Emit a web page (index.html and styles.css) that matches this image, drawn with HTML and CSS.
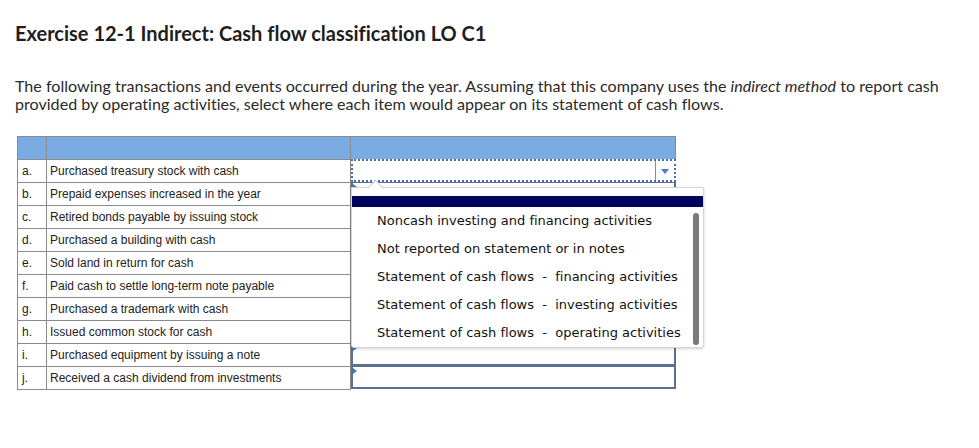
FILE: index.html
```html
<!DOCTYPE html>
<html>
<head>
<meta charset="utf-8">
<link rel="stylesheet" href="styles.css">
</head>
<body>
<div class="page">
  <h1 class="title">Exercise 12-1 Indirect: Cash flow classification LO C1</h1>
  <p class="intro">The following transactions and events occurred during the year. Assuming that this company uses the <em>indirect method</em> to report cash provided by operating activities, select where each item would appear on its statement of cash flows.</p>
  <div class="table-wrap">
    <table class="grid">
      <thead>
        <tr><th class="c-letter"></th><th class="c-desc"></th><th class="c-ans"></th></tr>
      </thead>
      <tbody>
        <tr><td class="c-letter">a.</td><td class="c-desc">Purchased treasury stock with cash</td><td class="c-ans"><div class="sel sel-focus"><span class="sel-btn"><span class="arrow"></span></span></div></td></tr>
        <tr><td class="c-letter">b.</td><td class="c-desc">Prepaid expenses increased in the year</td><td class="c-ans"><div class="sel"><span class="mark"></span></div></td></tr>
        <tr><td class="c-letter">c.</td><td class="c-desc">Retired bonds payable by issuing stock</td><td class="c-ans"><div class="sel"><span class="mark"></span></div></td></tr>
        <tr><td class="c-letter">d.</td><td class="c-desc">Purchased a building with cash</td><td class="c-ans"><div class="sel"><span class="mark"></span></div></td></tr>
        <tr><td class="c-letter">e.</td><td class="c-desc">Sold land in return for cash</td><td class="c-ans"><div class="sel"><span class="mark"></span></div></td></tr>
        <tr><td class="c-letter">f.</td><td class="c-desc">Paid cash to settle long-term note payable</td><td class="c-ans"><div class="sel"><span class="mark"></span></div></td></tr>
        <tr><td class="c-letter">g.</td><td class="c-desc">Purchased a trademark with cash</td><td class="c-ans"><div class="sel"><span class="mark"></span></div></td></tr>
        <tr><td class="c-letter">h.</td><td class="c-desc">Issued common stock for cash</td><td class="c-ans"><div class="sel"><span class="mark"></span></div></td></tr>
        <tr><td class="c-letter">i.</td><td class="c-desc">Purchased equipment by issuing a note</td><td class="c-ans"><div class="sel"><span class="mark"></span></div></td></tr>
        <tr><td class="c-letter">j.</td><td class="c-desc">Received a cash dividend from investments</td><td class="c-ans"><div class="sel"><span class="mark"></span></div></td></tr>
      </tbody>
    </table>
    <div class="popup">
      <span class="caret"></span>
      <div class="popup-bar"></div>
      <ul class="options">
        <li>Noncash investing and financing activities</li>
        <li>Not reported on statement or in notes</li>
        <li>Statement of cash flows&nbsp; -&nbsp; financing activities</li>
        <li>Statement of cash flows&nbsp; -&nbsp; investing activities</li>
        <li>Statement of cash flows&nbsp; -&nbsp; operating activities</li>
      </ul>
      <span class="scroll"></span>
    </div>
  </div>
</div>
</body>
</html>
```
FILE: styles.css
```css
html, body {
  margin: 0;
  padding: 0;
  background: #ffffff;
}
.page {
  padding: 20px 0 0 15px;
}
.title {
  margin: 0;
  font-family: Lato, "Open Sans", sans-serif;
  font-weight: 700;
  font-size: 20px;
  line-height: 26px;
  color: #1e1e1e;
  font-variant-ligatures: none;
}
.intro {
  margin: 31px 0 0 0;
  font-family: Lato, "Open Sans", sans-serif;
  font-size: 16.1px;
  line-height: 18px;
  color: #2a2a2a;
  width: 940px;
  font-variant-ligatures: none;
}
.intro em {
  font-style: italic;
}
.table-wrap {
  position: relative;
  margin: 23px 0 0 2px;
  width: 700px;
}
.grid {
  border-collapse: collapse;
  font-family: "Liberation Sans", Arial, sans-serif;
  font-size: 12px;
  color: #222;
}
.grid th {
  background: #7aabe2;
  height: 22px;
  padding: 0;
  border: 1px solid #8a8a8a;
}
.grid td {
  height: 22px;
  padding: 0;
  border: 1px solid #8a8a8a;
  vertical-align: middle;
}
.c-letter {
  width: 28px;
}
td.c-letter {
  padding-left: 4px;
  box-sizing: border-box;
}
.c-desc {
  width: 300px;
}
td.c-desc {
  padding-left: 3px;
}
.c-ans {
  width: 324px;
}
.grid td.c-ans {
  border: none;
  position: relative;
}
.sel {
  position: relative;
  box-sizing: border-box;
  height: 23px;
  border: 2px solid #5b6f96;
  border-top-width: 1px;
  margin-top: -1px;
}
.sel-focus {
  border: 2px dotted #4a6ea8;
  background: #fff;
}
.sel-btn {
  position: absolute;
  right: 0;
  top: 0;
  bottom: 0;
  width: 18px;
  border-left: 1px solid #8a8a8a;
}
.arrow {
  position: absolute;
  left: 5px;
  top: 8px;
  width: 0;
  height: 0;
  border-left: 4px solid transparent;
  border-right: 4px solid transparent;
  border-top: 5px solid #4a7bc4;
}
.mark {
  position: absolute;
  left: 0;
  top: 1px;
  width: 0;
  height: 0;
  border-top: 3px solid transparent;
  border-bottom: 3px solid transparent;
  border-left: 4px solid #3d79cc;
}
.popup {
  position: absolute;
  left: 334px;
  top: 51px;
  width: 353px;
  height: 161px;
  box-sizing: border-box;
  background: #ffffff;
  border: 1px solid #d6d6d6;
  border-radius: 0 0 3px 3px;
  box-shadow: 0 1px 3px rgba(0,0,0,0.18);
}
.caret {
  position: absolute;
  left: 18px;
  top: -6px;
  width: 10px;
  height: 10px;
  background: #fff;
  border-left: 1px solid #cfcfcf;
  border-top: 1px solid #cfcfcf;
  transform: rotate(45deg);
}
.popup-bar {
  position: relative;
  margin: 8px 0 0 0;
  height: 11px;
  background: #03035e;
}
.options {
  list-style: none;
  margin: 0;
  padding: 0;
  font-family: "DejaVu Sans", Verdana, sans-serif;
  font-size: 13px;
  color: #111;
  font-variant-ligatures: none;
}
.options li {
  height: 28px;
  line-height: 28px;
  padding-left: 25px;
  white-space: nowrap;
}
.scroll {
  position: absolute;
  left: 341px;
  top: 25px;
  width: 6px;
  height: 132px;
  border-radius: 3px;
  background: #7a7a7a;
}
```
